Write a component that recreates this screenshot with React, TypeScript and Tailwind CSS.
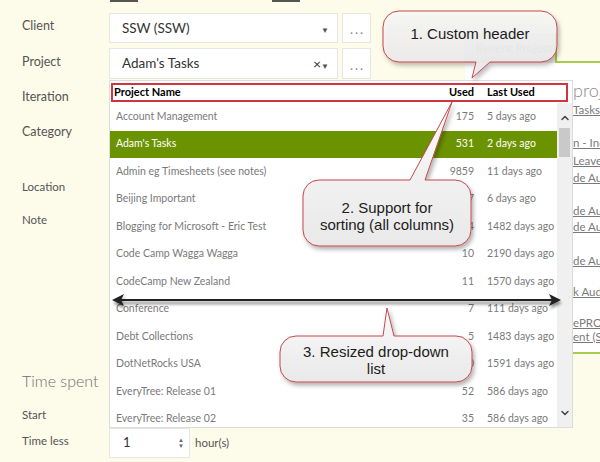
import { ChevronUp, ChevronDown } from 'lucide-react';

const rows = [
  { name: 'Account Management', used: '175', last: '5 days ago' },
  { name: "Adam's Tasks", used: '531', last: '2 days ago', active: true },
  { name: 'Admin eg Timesheets (see notes)', used: '9859', last: '11 days ago' },
  { name: 'Beijing Important', used: '187', last: '6 days ago' },
  { name: 'Blogging for Microsoft - Eric Test', used: '14', last: '1482 days ago' },
  { name: 'Code Camp Wagga Wagga', used: '10', last: '2190 days ago' },
  { name: 'CodeCamp New Zealand', used: '11', last: '1570 days ago' },
  { name: 'Conference', used: '7', last: '111 days ago' },
  { name: 'Debt Collections', used: '5', last: '1483 days ago' },
  { name: 'DotNetRocks USA', used: '10', last: '1591 days ago' },
  { name: 'EveryTree: Release 01', used: '52', last: '586 days ago' },
  { name: 'EveryTree: Release 02', used: '35', last: '586 days ago' },
];

const recent = [
  { text: 'Tasks - SSW', cls: 'mt-0' },
  { text: 'n - Induction', cls: 'mt-[17px]' },
  { text: 'Leave - SSW', cls: 'mt-[2px]' },
  { text: 'de Audit', cls: 'mt-[1px]' },
  { text: 'de Audit', cls: 'mt-[17px]' },
  { text: 'de Audit', cls: 'mt-0' },
  { text: 'de Audit', cls: 'mt-[18px]' },
  { text: 'k Audit', cls: 'mt-[15px]' },
  { text: 'ePRO', cls: 'mt-[15px]' },
  { text: 'ent (SSW)', cls: '-mt-[2px]' },
];

type Box = { x: number; y: number; w: number; h: number };

function bubblePath(b: Box, tail: 'top' | 'bottom', t1: number, t2: number, tip: [number, number]) {
  const r = 16;
  const { x, y, w, h } = b;
  if (tail === 'bottom') {
    return `M${x + r},${y} H${x + w - r} A${r},${r} 0 0 1 ${x + w},${y + r} V${y + h - r} A${r},${r} 0 0 1 ${x + w - r},${y + h} H${t2} L${tip[0]},${tip[1]} L${t1},${y + h} H${x + r} A${r},${r} 0 0 1 ${x},${y + h - r} V${y + r} A${r},${r} 0 0 1 ${x + r},${y} Z`;
  }
  return `M${x + r},${y} H${t1} L${tip[0]},${tip[1]} L${t2},${y} H${x + w - r} A${r},${r} 0 0 1 ${x + w},${y + r} V${y + h - r} A${r},${r} 0 0 1 ${x + w - r},${y + h} H${x + r} A${r},${r} 0 0 1 ${x},${y + h - r} V${y + r} A${r},${r} 0 0 1 ${x + r},${y} Z`;
}

function Annotations() {
  return (
    <svg className="absolute inset-0 pointer-events-none" width="600" height="462" viewBox="0 0 600 462">
      <defs>
        <linearGradient id="bub" x1="0" y1="0" x2="0" y2="1">
          <stop offset="0" stopColor="#fafafa" />
          <stop offset="1" stopColor="#e9e9e9" />
        </linearGradient>
        <filter id="sh" x="-20%" y="-20%" width="140%" height="160%">
          <feDropShadow dx="2" dy="3" stdDeviation="2" floodColor="#000" floodOpacity="0.3" />
        </filter>
        <filter id="ash" x="-5%" y="-200%" width="110%" height="500%">
          <feGaussianBlur stdDeviation="1.5" />
        </filter>
      </defs>
      {/* resize arrow */}
      <g opacity="0.45" filter="url(#ash)" transform="translate(1,3)">
        <line x1="118" y1="300" x2="555" y2="300" stroke="#000" strokeWidth="2.5" />
        <path d="M112,300 L124,294 L121,300 L124,306 Z" fill="#000" />
        <path d="M561,300 L549,294 L552,300 L549,306 Z" fill="#000" />
      </g>
      <line x1="118" y1="300" x2="555" y2="300" stroke="#222" strokeWidth="2" />
      <path d="M112,300 L124,294 L121,300 L124,306 Z" fill="#222" />
      <path d="M561,300 L549,294 L552,300 L549,306 Z" fill="#222" />

      <path d={bubblePath({ x: 383, y: 11, w: 174, h: 51 }, 'bottom', 476, 490, [472, 78])} fill="url(#bub)" fillOpacity="0.82" stroke="#c8474d" strokeWidth="1" filter="url(#sh)" />
      <path d={bubblePath({ x: 303, y: 180, w: 168, h: 66 }, 'top', 410, 425, [452, 102])} fill="url(#bub)" stroke="#c8474d" strokeWidth="1" filter="url(#sh)" />
      <path d={bubblePath({ x: 280, y: 336, w: 192, h: 46 }, 'top', 383, 394, [387, 308])} fill="url(#bub)" stroke="#c8474d" strokeWidth="1" filter="url(#sh)" />
    </svg>
  );
}

function CalloutText({ className, lines }: { className: string; lines: string[] }) {
  return (
    <div className={`absolute flex flex-col items-center justify-center text-[15px] leading-[17px] text-[#1c1c1c] font-['Liberation_Sans',Arial,sans-serif] pointer-events-none ${className}`}>
      {lines.map((l) => (
        <span key={l}>{l}</span>
      ))}
    </div>
  );
}

function Dropdown() {
  return (
    <div className="absolute left-[109px] top-[80px] w-[464px] h-[348px] bg-white border border-[#dcdcdc] overflow-hidden">
      <div className="h-[22px] pt-[2px] pl-[1px]">
        <div className="w-[457px] h-[19px] border-2 border-[#d0343c] flex items-center text-[11px] font-bold text-black">
          <span className="w-[312px] pl-[1px]">Project Name</span>
          <span className="w-[49px] text-right">Used</span>
          <span className="pl-[13px]">Last Used</span>
        </div>
      </div>
      <div className="flex">
        <div className="w-[447px]">
          {rows.map((r) => (
            <div
              key={r.name}
              className={`h-[27.5px] flex items-center text-[10.5px] whitespace-nowrap ${r.active ? 'bg-[#6b9300] text-white' : 'text-[#7a7a7a]'}`}
            >
              <span className="w-[314px] pl-[6px]">{r.name}</span>
              <span className="w-[50px] text-right">{r.used}</span>
              <span className="pl-[13px]">{r.last}</span>
            </div>
          ))}
        </div>
        <div className="w-[15px] h-[326px] bg-[#f0f0f0] flex flex-col items-center">
          <ChevronUp size={12} strokeWidth={3} className="text-[#444] mt-[9px]" />
          <div className="w-[11px] h-[29px] bg-[#c9c9c9] mt-[4px]" />
          <ChevronDown size={12} strokeWidth={3} className="text-[#444] mt-auto mb-[10px]" />
        </div>
      </div>
    </div>
  );
}

function Select({ value, clear }: { value: string; clear?: boolean }) {
  return (
    <div className="w-[229px] h-full bg-white border border-[#e6e6e2] flex items-center pl-[12px] pr-[8px] text-[13.5px] text-[#333]">
      <span className="flex-1">{value}</span>
      {clear && <span className="text-[14px] text-[#333] leading-none">×</span>}
      <span className="text-[8px] text-[#555] mt-[4px]">▼</span>
    </div>
  );
}

function DotsButton() {
  return (
    <div className="w-[29px] h-full bg-white border border-[#e6e6e2] flex items-end justify-center pb-[6px] text-[13px] leading-none text-[#888] tracking-[2px] pl-[2px]">
      ...
    </div>
  );
}

export default function App() {
  return (
    <div className="relative w-[600px] h-[462px] bg-[#fdfbea] overflow-hidden font-['Lato','Open_Sans',sans-serif]">
      <div className="flex h-full">
        {/* labels */}
        <div className="w-[109px] shrink-0 pl-[22px] flex flex-col whitespace-nowrap text-[11.5px] leading-[16px] text-[#555]">
          <span className="mt-[18px] text-[12.5px]">Client</span>
          <span className="mt-[20px] text-[12.5px]">Project</span>
          <span className="mt-[19px] text-[12.5px]">Iteration</span>
          <span className="mt-[19px] text-[12.5px]">Category</span>
          <span className="mt-[39px]">Location</span>
          <span className="mt-[17px]">Note</span>
          <span className="mt-[142px] text-[16px] leading-[22px] text-[#6f6f6f] font-light">Time spent</span>
          <span className="mt-[15px]">Start</span>
          <span className="mt-[10px]">Time less</span>
        </div>

        {/* form fields */}
        <div className="w-[356px] shrink-0 flex flex-col">
          <div className="h-[2px] flex">
            <div className="ml-[1px] w-[28px] bg-[#555]" />
            <div className="ml-[134px] w-[28px] bg-[#555]" />
          </div>
          <div className="mt-[11px] h-[30px] flex gap-[4px]">
            <Select value="SSW (SSW)" />
            <DotsButton />
          </div>
          <div className="mt-[5px] h-[31px] flex gap-[4px]">
            <Select value="Adam's Tasks" clear />
            <DotsButton />
          </div>
          <div className="mt-[349px] h-[30px] flex items-center">
            <div className="w-[81px] h-full bg-white border border-[#e6e6e2] flex items-center pl-[13px] pr-[5px] text-[13px] text-[#333]">
              <span className="flex-1">1</span>
              <span className="flex flex-col text-[6px] leading-[6px] text-[#666]">
                <span>▲</span>
                <span>▼</span>
              </span>
            </div>
            <span className="ml-[5px] text-[11.5px] text-[#555]">hour(s)</span>
          </div>
        </div>

        {/* recent projects panel */}
        <div className="flex-1 min-w-0 mt-[33px] flex flex-col">
          <div className="h-[30px] flex">
            <div className="w-[90px] shrink-0 bg-[#e9e9e7] border-l border-[#d8d8d8] flex items-center pl-[10px] text-[12px] text-[#bdbdbd] whitespace-nowrap overflow-hidden">
              Recent Projects
            </div>
            <div className="flex-1 border-l-2 border-b-2 border-[#a8cc4c]" />
          </div>
          <div className="h-[291px] bg-white border-b-2 border-[#a8cc4c] pl-[108px] overflow-hidden flex flex-col whitespace-nowrap">
            <span className="mt-[15px] text-[18px] leading-[24px] text-[#8c8c8c] font-light">projects</span>
            {recent.map((r, i) => (
              <span key={i} className={`${r.cls} text-[11.5px] leading-[16px] text-[#7a7a7a] underline`}>
                {r.text}
              </span>
            ))}
          </div>
        </div>
      </div>

      <Dropdown />
      <Annotations />
      <CalloutText className="left-[383px] top-[11px] w-[174px] h-[44px]" lines={['1. Custom header']} />
      <CalloutText className="left-[303px] top-[198px] w-[168px] h-[36px]" lines={['2. Support for', 'sorting (all columns)']} />
      <CalloutText className="left-[280px] top-[343px] w-[192px] h-[34px]" lines={['3. Resized drop-down', 'list']} />
    </div>
  );
}
